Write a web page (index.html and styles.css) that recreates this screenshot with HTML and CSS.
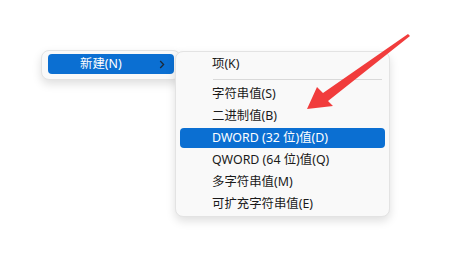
FILE: index.html
```html
<!DOCTYPE html>
<html>
<head>
<meta charset="utf-8">
<link rel="stylesheet" href="styles.css">
</head>
<body>
<div class="stage">
  <div class="menus">
    <div class="menu menu-left">
      <div class="item active">
        <span class="label">新建(N)</span>
        <svg class="chev" width="6" height="9" viewBox="0 0 6 9"><path d="M1.2 1 L4.6 4.5 L1.2 8" fill="none" stroke="#1b2a3a" stroke-width="1.3"/></svg>
      </div>
    </div>
    <div class="menu menu-right">
      <div class="item"><span class="label">项(K)</span></div>
      <div class="sep"></div>
      <div class="item"><span class="label">字符串值(S)</span></div>
      <div class="item"><span class="label">二进制值(B)</span></div>
      <div class="item active"><span class="label">DWORD (32 位)值(D)</span></div>
      <div class="item"><span class="label">QWORD (64 位)值(Q)</span></div>
      <div class="item"><span class="label">多字符串值(M)</span></div>
      <div class="item"><span class="label">可扩充字符串值(E)</span></div>
    </div>
  </div>
  <svg class="arrow" width="471" height="258" viewBox="0 0 471 258">
    <polygon points="307,109 317,87 323,93 408,34 410,36 328,101 333,106" fill="#f13c3c"/>
  </svg>
</div>
</body>
</html>
```
FILE: styles.css
```css
html, body {
  margin: 0;
  padding: 0;
  background: #ffffff;
}
body {
  width: 471px;
  height: 258px;
  overflow: hidden;
  font-family: "Segoe UI", "Noto Sans", "Noto Sans CJK SC", sans-serif;
  font-size: 12.4px;
  color: #1a1a1a;
}
.stage {
  position: relative;
  width: 471px;
  height: 258px;
}
.menus {
  display: flex;
  align-items: flex-start;
  padding: 50px 0 0 41px;
}
.menu {
  background: #f9f9f9;
  border: 1px solid #e3e3e3;
  border-radius: 8px;
  box-shadow: 0 4px 10px rgba(0, 0, 0, 0.13);
  box-sizing: border-box;
  display: flex;
  flex-direction: column;
}
.menu-left {
  width: 140px;
  padding: 3px 6px 5px 6px;
  position: relative;
  z-index: 1;
}
.menu-right {
  width: 215px;
  margin-left: -6px;
  margin-top: 1px;
  padding: 1px 4px;
  position: relative;
  z-index: 2;
}
.item {
  display: flex;
  align-items: center;
  height: 20px;
  line-height: 20px;
  margin: 1px 0;
  padding-left: 32px;
  border-radius: 4px;
  white-space: nowrap;
}
.menu-left .item {
  margin: 0;
  padding-left: 32px;
  padding-right: 9px;
  justify-content: space-between;
}
.item.active {
  background: #0b6fd2;
  color: #ffffff;
}
.chev {
  display: block;
}
.sep {
  height: 1px;
  background: #d9d9d9;
  margin: 4px 3px 3px 33px;
}
.arrow {
  position: absolute;
  left: 0;
  top: 0;
  z-index: 5;
  pointer-events: none;
}
```
